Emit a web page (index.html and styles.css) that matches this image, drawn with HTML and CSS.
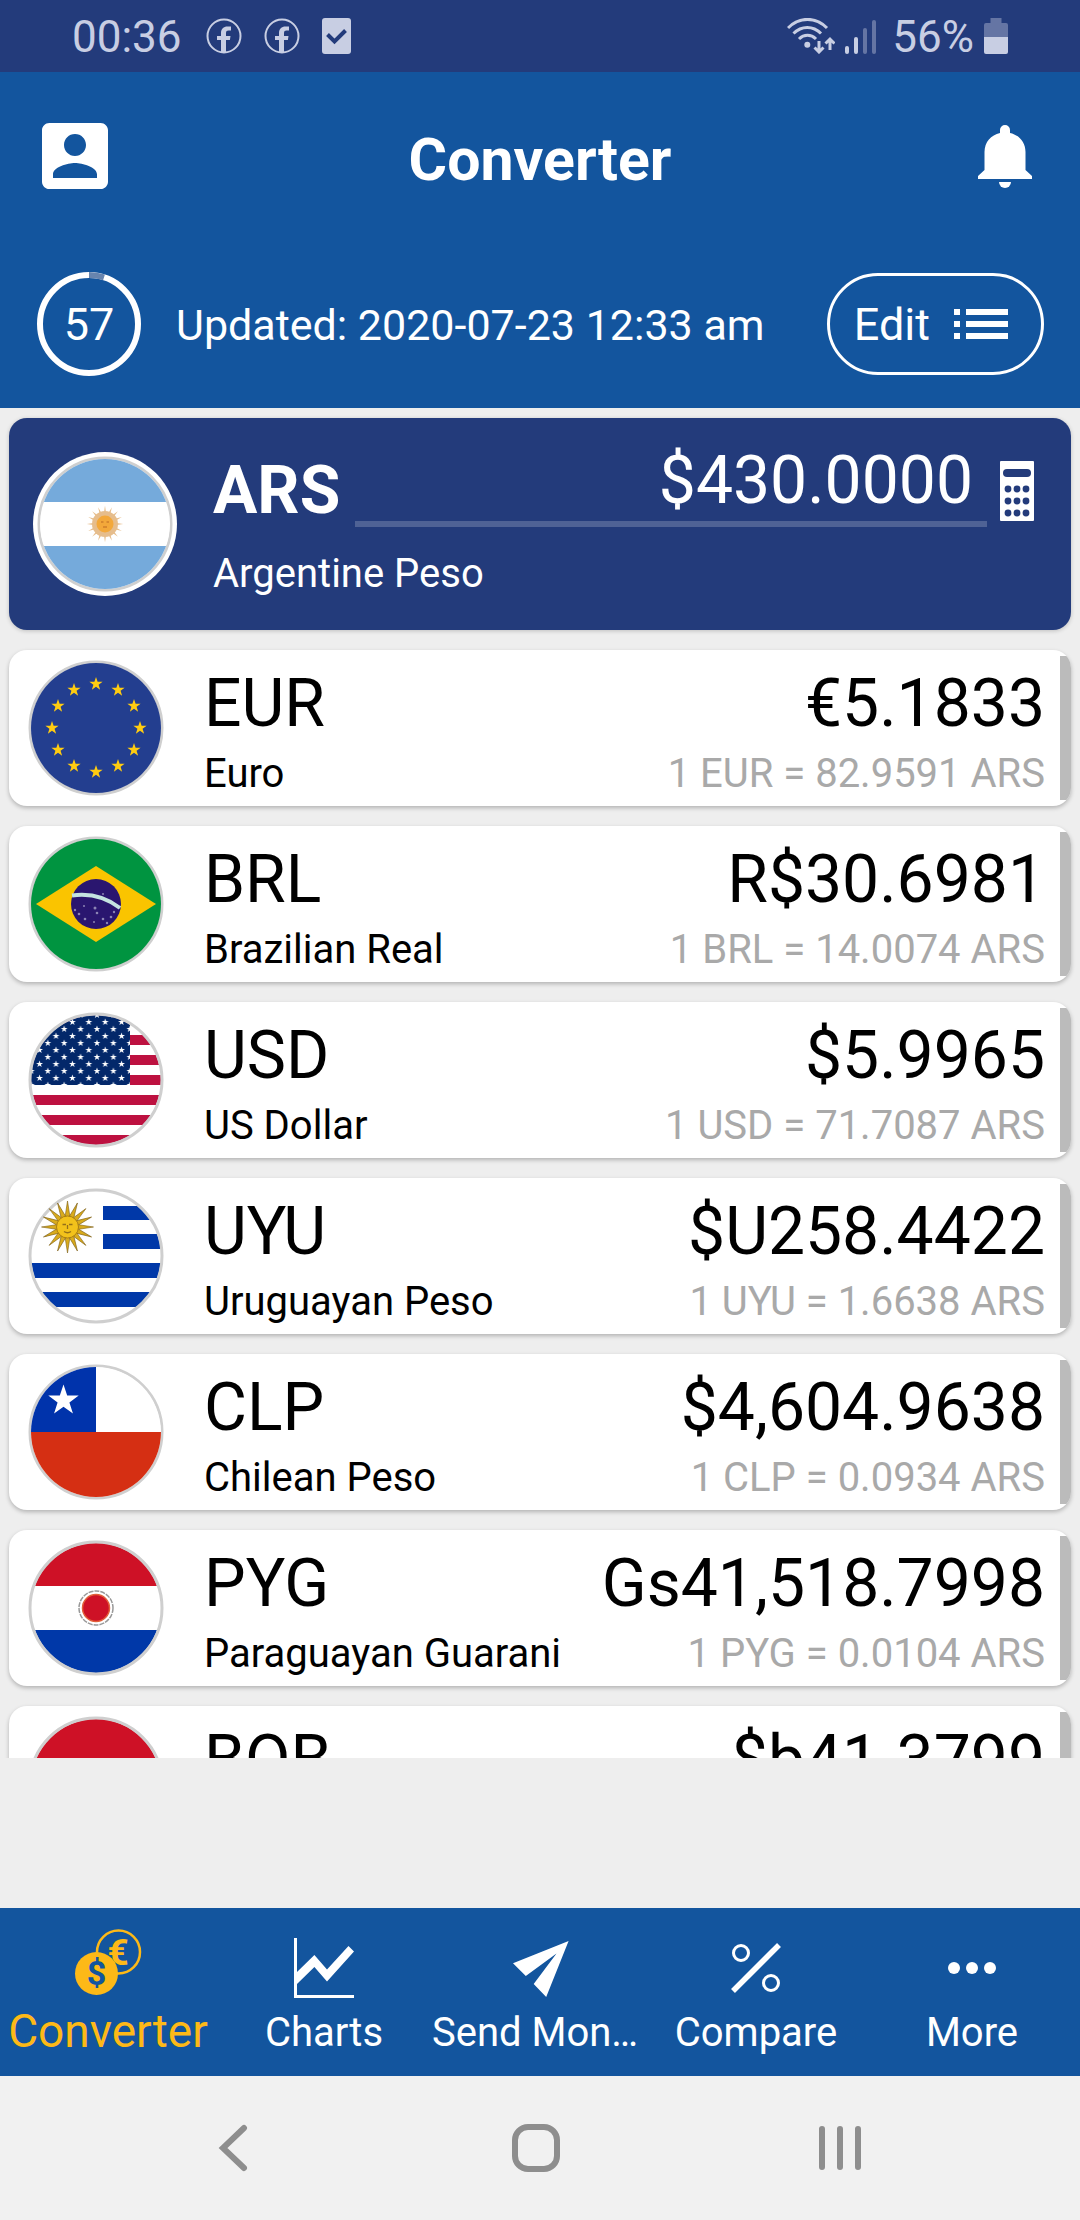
FILE: index.html
```html
<!DOCTYPE html>
<html lang="en">
<head>
    <meta charset="UTF-8">
    <meta name="viewport" content="width=device-width, initial-scale=1.0">
    <title>Converter</title>
    <link rel="stylesheet" href="styles.css">
</head>
<body>

<!-- Shared flag parts -->
<svg class="defs" width="0" height="0" aria-hidden="true">
    <defs>
        <clipPath id="round"><circle cx="68" cy="68" r="65"/></clipPath>
        <polygon id="star" points="0,-10 2.3,-3.1 9.5,-3.1 3.7,1.2 5.9,8.1 0,3.9 -5.9,8.1 -3.7,1.2 -9.5,-3.1 -2.3,-3.1"/>
        <circle id="ring" cx="68" cy="68" r="66" fill="none" stroke="#cfcfcf" stroke-width="3"/>
        <path id="ray" d="M0-26L4 0L0 26L-4 0Z"/>
        <g id="rays">
            <use href="#ray"/>
            <use href="#ray" transform="rotate(22.5)"/>
            <use href="#ray" transform="rotate(45)"/>
            <use href="#ray" transform="rotate(67.5)"/>
            <use href="#ray" transform="rotate(90)"/>
            <use href="#ray" transform="rotate(112.5)"/>
            <use href="#ray" transform="rotate(135)"/>
            <use href="#ray" transform="rotate(157.5)"/>
        </g>
        <pattern id="us-stars" x="3.4" y="3" width="16.4" height="14" patternUnits="userSpaceOnUse">
            <g fill="#fff">
                <use href="#star" transform="translate(8.2 7) scale(.36)"/>
                <use href="#star" transform="scale(.36)"/>
                <use href="#star" transform="translate(16.4 0) scale(.36)"/>
                <use href="#star" transform="translate(0 14) scale(.36)"/>
                <use href="#star" transform="translate(16.4 14) scale(.36)"/>
            </g>
        </pattern>
        <g id="facebook">
            <circle cx="18" cy="18" r="16.5" fill="none" stroke="currentColor" stroke-width="2"/>
            <path d="M15 35V22h-4v-4h4v-3c0-4 2.500-6.500 6.500-6.500H25v4h-2.500c-1.700 0-2.500.8-2.500 2.500v3h4.500l-.6 4H20v13z" fill="currentColor"/>
        </g>
    </defs>
</svg>

<div class="status-bar">
    <span class="clock">00:36</span>
    <div class="notifications">
        <svg width="36" height="36" viewBox="0 0 36 36"><use href="#facebook"/></svg>
        <svg width="36" height="36" viewBox="0 0 36 36"><use href="#facebook"/></svg>
        <svg width="29" height="36" viewBox="0 0 29 36">
            <rect width="29" height="36" rx="3" fill="currentColor"/>
            <path d="M5.500 16.500l7 7L23.500 12.500" fill="none" stroke="#233b7b" stroke-width="4"/>
        </svg>
    </div>
    <div class="signals">
        <svg width="48" height="36" viewBox="0 0 48 36" fill="none" stroke="currentColor" stroke-width="3">
            <path d="M1 10C12-1.500 29-1.500 40 10M6.500 15.500c8-8 19.500-8 27.500 0M12 21c5-5 12-5 17 0"/>
            <circle cx="20.300" cy="26.700" r="3" fill="currentColor" stroke="none"/>
            <path d="M32 23v10M27.500 29.500l4.500 4.500 4.500-4.500M43 32V22M38.500 25.500L43 21l4.500 4.500"/>
        </svg>
        <svg width="31" height="34" viewBox="0 0 31 34" fill="currentColor">
            <rect y="26" width="4" height="8" rx="2"/>
            <rect x="9" y="17" width="4" height="17" rx="2"/>
            <rect x="18" y="8" width="4" height="26" rx="2" opacity=".4"/>
            <rect x="27" width="4" height="34" rx="2" opacity=".4"/>
        </svg>
    </div>
    <span class="percent">56%</span>
    <svg width="24" height="36" viewBox="0 0 24 36" fill="currentColor">
        <path d="M6.500 0h11v5H22q2 0 2 2v12H0V7q0-2 2-2h4.500z" opacity=".4"/>
        <path d="M0 19h24v15q0 2-2 2H2q-2 0-2-2z"/>
    </svg>
</div>

<header>
    <div class="title-bar">
        <button class="icon-button" type="button" aria-label="Account">
            <svg width="66" height="66" viewBox="3 3 18 18" fill="currentColor"><path d="M3 5v14c0 1.100.89 2 2 2h14c1.100 0 2-.9 2-2V5c0-1.100-.9-2-2-2H5c-1.110 0-2 .9-2 2zm12 4c0 1.660-1.340 3-3 3s-3-1.340-3-3 1.340-3 3-3 3 1.340 3 3zm-9 8c0-2 4-3.100 6-3.100s6 1.100 6 3.100v1H6v-1z"/></svg>
        </button>
        <h1>Converter</h1>
        <button class="icon-button" type="button" aria-label="Alerts">
            <svg width="54" height="63" viewBox="0 0 54 63" fill="currentColor">
                <path d="M22 8V5a5 5 0 0 1 10 0v3c9 2 15.500 9 15.500 19v18L54 51v3H0v-3l6.500-6V27C6.500 17 13 10 22 8z"/>
                <path d="M21 57h12a6 6 0 0 1-12 0z"/>
            </svg>
        </button>
    </div>
    <div class="update-bar">
        <div class="countdown">
            <svg width="104" height="104" viewBox="0 0 104 104" fill="none" stroke-width="6">
                <circle cx="52" cy="52" r="49" stroke="#fff"/>
                <path d="M52 3A49 49 0 0 1 67 5.400" stroke="#6784ae"/>
            </svg>
            <span>57</span>
        </div>
        <p>Updated: 2020-07-23 12:33 am</p>
        <button class="edit-button" type="button">
            Edit
            <svg width="54" height="30" viewBox="0 0 54 30" fill="currentColor"><path d="M0 0h6v6H0zM12 0h42v6H12zM0 12h6v6H0zM12 12h42v6H12zM0 24h6v6H0zM12 24h42v6H12z"/></svg>
        </button>
    </div>
</header>

<main>
    <section class="base-card">
        <svg class="base-flag" width="144" height="144" viewBox="0 0 144 144">
            <circle cx="72" cy="72" r="72" fill="#fff"/>
            <g transform="translate(4 4)">
                <use href="#ring"/>
                <g clip-path="url(#round)">
                    <rect width="136" height="136" fill="#fff"/>
                    <path d="M0 0h136v46H0zM0 90h136v46H0z" fill="#75aadb"/>
                </g>
                <use href="#rays" transform="translate(68 68) scale(.7)" fill="#e6bd8c"/>
                <circle cx="68" cy="68" r="13" fill="#e6bd8c"/>
                <circle cx="68" cy="68" r="8.500" fill="#f3a83a"/>
                <path d="M64 66h2.500M69.500 66H72M66 71h4" stroke="#cf7f2b" stroke-width="1.500"/>
            </g>
        </svg>
        <div class="base-info">
            <div class="base-row">
                <label class="base-code" for="amount">ARS</label>
                <input class="base-amount" id="amount" type="text" inputmode="decimal" value="$430.0000">
                <button class="icon-button calculator" type="button" aria-label="Calculator">
                    <svg width="34" height="60" viewBox="0 0 34 60">
                        <rect width="34" height="60" rx="1" fill="#fff"/>
                        <g fill="#233b7b">
                            <rect x="3" y="8" width="28" height="8" rx="4"/>
                            <circle cx="8" cy="28" r="3.400"/><circle cx="17" cy="28" r="3.400"/><circle cx="26" cy="28" r="3.400"/>
                            <circle cx="8" cy="40" r="3.400"/><circle cx="17" cy="40" r="3.400"/><circle cx="26" cy="40" r="3.400"/>
                            <circle cx="8" cy="52" r="3.400"/><circle cx="17" cy="52" r="3.400"/><circle cx="26" cy="52" r="3.400"/>
                        </g>
                    </svg>
                </button>
            </div>
            <p class="name">Argentine Peso</p>
        </div>
    </section>

    <ul class="currency-list">
        <li class="currency">
            <svg class="flag" width="136" height="136" viewBox="0 0 136 136">
                <use href="#ring"/>
                <circle cx="68" cy="68" r="65" fill="#233e8f"/>
                <g fill="#fc1" transform="translate(68 68)">
                    <use href="#star" transform="translate(0 -44) scale(.7)"/>
                    <use href="#star" transform="translate(22 -38) scale(.7)"/>
                    <use href="#star" transform="translate(38 -22) scale(.7)"/>
                    <use href="#star" transform="translate(44 0) scale(.7)"/>
                    <use href="#star" transform="translate(38 22) scale(.7)"/>
                    <use href="#star" transform="translate(22 38) scale(.7)"/>
                    <use href="#star" transform="translate(0 44) scale(.7)"/>
                    <use href="#star" transform="translate(-22 38) scale(.7)"/>
                    <use href="#star" transform="translate(-38 22) scale(.7)"/>
                    <use href="#star" transform="translate(-44 0) scale(.7)"/>
                    <use href="#star" transform="translate(-38 -22) scale(.7)"/>
                    <use href="#star" transform="translate(-22 -38) scale(.7)"/>
                </g>
            </svg>
            <div class="label">
                <h2>EUR</h2>
                <p class="name">Euro</p>
            </div>
            <div class="value">
                <p class="amount">€5.1833</p>
                <p class="rate">1 EUR = 82.9591 ARS</p>
            </div>
            <span class="handle"></span>
        </li>
        <li class="currency">
            <svg class="flag" width="136" height="136" viewBox="0 0 136 136">
                <use href="#ring"/>
                <circle cx="68" cy="68" r="65" fill="#009440"/>
                <path d="M68 30l60 38-60 38L8 68z" fill="#fac400"/>
                <circle cx="68" cy="68" r="25" fill="#2a166f"/>
                <path d="M44 59.500C62 57 79 62 92 72" fill="none" stroke="#c4e3e0" stroke-width="4"/>
                <g fill="#8c84b4">
                    <circle cx="47" cy="74" r="1.200"/><circle cx="51" cy="78" r="1.300"/><circle cx="56" cy="70" r="1"/>
                    <circle cx="57" cy="83" r="1.300"/><circle cx="67" cy="72" r="1.500"/><circle cx="69" cy="77" r="1.300"/>
                    <circle cx="66" cy="86" r="1"/><circle cx="75" cy="83" r="1.300"/><circle cx="79" cy="87" r="1.200"/>
                    <circle cx="83" cy="81" r="1.300"/><circle cx="86" cy="76" r="1.200"/><circle cx="75" cy="58" r="1"/>
                </g>
            </svg>
            <div class="label">
                <h2>BRL</h2>
                <p class="name">Brazilian Real</p>
            </div>
            <div class="value">
                <p class="amount">R$30.6981</p>
                <p class="rate">1 BRL = 14.0074 ARS</p>
            </div>
            <span class="handle"></span>
        </li>
        <li class="currency">
            <svg class="flag" width="136" height="136" viewBox="0 0 136 136">
                <g clip-path="url(#round)">
                    <rect width="136" height="136" fill="#fff"/>
                    <path d="M0 3h136v10H0zM0 23h136v10H0zM0 43h136v10H0zM0 63h136v10H0zM0 83h136v10H0zM0 103h136v10H0zM0 123h136v10H0z" fill="#bd1140"/>
                    <rect width="102" height="73" fill="#03286a"/>
                    <rect width="102" height="73" fill="url(#us-stars)"/>
                </g>
                <use href="#ring"/>
            </svg>
            <div class="label">
                <h2>USD</h2>
                <p class="name">US Dollar</p>
            </div>
            <div class="value">
                <p class="amount">$5.9965</p>
                <p class="rate">1 USD = 71.7087 ARS</p>
            </div>
            <span class="handle"></span>
        </li>
        <li class="currency">
            <svg class="flag" width="136" height="136" viewBox="0 0 136 136">
                <g clip-path="url(#round)">
                    <rect width="136" height="136" fill="#fff"/>
                    <path d="M75 18h61v14H75zM75 46h61v15H75zM0 75h136v15H0zM0 104h136v15H0z" fill="#0038a8"/>
                </g>
                <use href="#ring"/>
                <use href="#rays" transform="translate(39.500 39)" fill="#d9ab1c" stroke="#7d5f18" stroke-width=".6"/>
                <circle cx="39.500" cy="39" r="11" fill="#f2c21b" stroke="#a87d14"/>
                <path d="M34.500 36.500h3.500M41 36.500h3.500M39.500 37v4M36 43.500q3.500 2.500 7 0" fill="none" stroke="#94701a" stroke-width="1.300"/>
            </svg>
            <div class="label">
                <h2>UYU</h2>
                <p class="name">Uruguayan Peso</p>
            </div>
            <div class="value">
                <p class="amount">$U258.4422</p>
                <p class="rate">1 UYU = 1.6638 ARS</p>
            </div>
            <span class="handle"></span>
        </li>
        <li class="currency">
            <svg class="flag" width="136" height="136" viewBox="0 0 136 136">
                <use href="#ring"/>
                <g clip-path="url(#round)">
                    <rect width="136" height="136" fill="#fff"/>
                    <rect width="68" height="68" fill="#0033ab"/>
                    <rect y="68" width="136" height="68" fill="#d52f13"/>
                </g>
                <use href="#star" transform="translate(35.500 36.500) scale(1.600)" fill="#fff"/>
            </svg>
            <div class="label">
                <h2>CLP</h2>
                <p class="name">Chilean Peso</p>
            </div>
            <div class="value">
                <p class="amount">$4,604.9638</p>
                <p class="rate">1 CLP = 0.0934 ARS</p>
            </div>
            <span class="handle"></span>
        </li>
        <li class="currency">
            <svg class="flag" width="136" height="136" viewBox="0 0 136 136">
                <g clip-path="url(#round)">
                    <rect width="136" height="136" fill="#fff"/>
                    <rect width="136" height="46" fill="#ce1126"/>
                    <rect y="90" width="136" height="46" fill="#0038a8"/>
                </g>
                <use href="#ring"/>
                <circle cx="68" cy="68" r="17" fill="none" stroke="#999" stroke-width="1.500" stroke-dasharray="5 1"/>
                <circle cx="68" cy="68" r="13.500" fill="#ce1126" stroke="#e2603a" stroke-width="1.500"/>
            </svg>
            <div class="label">
                <h2>PYG</h2>
                <p class="name">Paraguayan Guarani</p>
            </div>
            <div class="value">
                <p class="amount">Gs41,518.7998</p>
                <p class="rate">1 PYG = 0.0104 ARS</p>
            </div>
            <span class="handle"></span>
        </li>
        <li class="currency">
            <svg class="flag" width="136" height="136" viewBox="0 0 136 136">
                <g clip-path="url(#round)">
                    <rect width="136" height="46" fill="#ce1126"/>
                    <rect y="46" width="136" height="44" fill="#fcd116"/>
                    <rect y="90" width="136" height="46" fill="#007934"/>
                </g>
                <use href="#ring"/>
            </svg>
            <div class="label">
                <h2>BOB</h2>
                <p class="name">Bolivian Boliviano</p>
            </div>
            <div class="value">
                <p class="amount">$b41.3799</p>
                <p class="rate">1 BOB = 10.3915 ARS</p>
            </div>
            <span class="handle"></span>
        </li>
    </ul>
</main>

<nav class="tabs">
    <a class="tab active" href="#converter">
        <svg width="80" height="80" viewBox="0 0 80 80">
            <circle cx="50.500" cy="24" r="21.500" fill="none" stroke="currentColor" stroke-width="2.500"/>
            <text class="coin" x="50" y="37" font-size="37" fill="currentColor">€</text>
            <circle cx="28.500" cy="45.500" r="21.500" fill="currentColor"/>
            <text class="coin" x="28.500" y="57" font-size="34" fill="#13559e">$</text>
        </svg>
        <span>Converter</span>
    </a>
    <a class="tab" href="#charts">
        <svg width="80" height="80" viewBox="0 0 80 80" fill="currentColor">
            <path d="M10 10h3v57h57v3H10z"/>
            <path d="M13 44l17.400-17L43 41.500 64.500 18l5.500 5.500-27 30L30.400 39 13 56z"/>
        </svg>
        <span>Charts</span>
    </a>
    <a class="tab" href="#send">
        <svg width="80" height="80" viewBox="0 0 80 80" fill="currentColor"><path d="M13 35.300L68.600 13 46.200 69 33.700 56 56.500 25.400 25.800 48z"/></svg>
        <span>Send Money</span>
    </a>
    <a class="tab" href="#compare">
        <svg width="80" height="80" viewBox="0 0 80 80" fill="none" stroke="currentColor" stroke-width="3">
            <circle cx="25" cy="25" r="7.500"/>
            <circle cx="55" cy="55" r="7.500"/>
            <path d="M17 63L63 17" stroke-width="5.500"/>
        </svg>
        <span>Compare</span>
    </a>
    <a class="tab" href="#more">
        <svg width="80" height="80" viewBox="0 0 80 80" fill="currentColor">
            <circle cx="22" cy="40" r="6"/><circle cx="40" cy="40" r="6"/><circle cx="58" cy="40" r="6"/>
        </svg>
        <span>More</span>
    </a>
</nav>

<div class="system-nav">
    <button type="button" aria-label="Back">
        <svg width="48" height="48" viewBox="0 0 48 48"><path d="M36 4L15 24l21 20"/></svg>
    </button>
    <button type="button" aria-label="Home">
        <svg width="48" height="48" viewBox="0 0 48 48"><rect x="3" y="3" width="42" height="42" rx="13"/></svg>
    </button>
    <button type="button" aria-label="Recent apps">
        <svg width="48" height="48" viewBox="0 0 48 48"><path d="M6 5v38M24 5v38M42 5v38"/></svg>
    </button>
</div>

</body>
</html>
```

FILE: styles.css
```css
* {
    box-sizing: border-box;
}

body {
    font-family: Roboto, sans-serif;
    background-color: #eee;
    color: #000;
    margin: 0;
    height: 100vh;
    display: flex;
    flex-direction: column;
}

h1, h2, p, ul {
    margin: 0;
    padding: 0;
}

svg {
    display: block;
    flex-shrink: 0;
}

button {
    font: inherit;
    color: inherit;
    background: none;
    border: none;
    padding: 0;
    cursor: pointer;
}

.defs {
    position: absolute;
}

/* Phone status bar */
.status-bar {
    display: flex;
    align-items: center;
    height: 72px;
    padding: 0 72px;
    background-color: #233b7b;
    color: #c8cee3;
    font-size: 44px;
    line-height: 54px;
    flex-shrink: 0;
}

.clock,
.percent {
    padding-top: 2px;
}

.notifications {
    display: flex;
    gap: 22px;
    margin-left: 24px;
    margin-right: auto;
}

.signals {
    display: flex;
    align-items: flex-end;
    gap: 10px;
}

.percent {
    margin: 0 10px 0 16px;
}

/* Header */
header {
    background-color: #13559e;
    color: #fff;
    flex-shrink: 0;
}

.title-bar {
    display: grid;
    grid-template-columns: 1fr auto 1fr;
    align-items: center;
    height: 168px;
    padding: 0 48px 0 42px;
}

.title-bar h1 {
    font-size: 59px;
    line-height: 70px;
    padding-top: 8px;
    padding-left: 6px;
}

.title-bar .icon-button:last-child {
    justify-self: end;
}

.title-bar .icon-button:first-child {
    justify-self: start;
}

.update-bar {
    display: flex;
    align-items: center;
    height: 168px;
    padding: 0 36px 0 37px;
    font-size: 45px;
}

.countdown {
    display: grid;
    place-items: center;
}

.countdown > * {
    grid-area: 1 / 1;
}

.update-bar p {
    margin-left: 35px;
    margin-right: auto;
    padding-top: 2px;
    font-size: 43px;
    white-space: nowrap;
}

.edit-button {
    display: flex;
    align-items: center;
    gap: 24px;
    height: 102px;
    padding: 0 33px 0 24px;
    border: 3px solid #fff;
    border-radius: 51px;
}

/* Currency cards */
main {
    flex: 1;
    min-height: 0;
    margin-bottom: 150px;
    padding: 10px 9px 0;
    overflow: hidden;
}

.base-card {
    display: flex;
    align-items: center;
    padding: 0 37px 0 24px;
    margin-bottom: 20px;
    background-color: #233b7b;
    color: #fff;
    border-radius: 18px;
    box-shadow: 0 1px 4px rgba(0, 0, 0, 0.2);
}

.base-info {
    flex: 1;
    min-width: 0;
    padding: 23px 0 33px 36px;
}

.base-row {
    display: flex;
    align-items: flex-start;
    margin-bottom: 10px;
}

.base-code {
    font-size: 66px;
    font-weight: bold;
    line-height: 100px;
}

.base-amount {
    flex: 1;
    min-width: 0;
    height: 86px;
    margin: 0 13px 0 15px;
    padding: 0 14px 2px 0;
    border: none;
    border-bottom: 6px solid #4f6295;
    background: none;
    color: #fff;
    font: 66px Roboto, sans-serif;
    text-align: right;
    outline: none;
}

.calculator {
    margin-top: 20px;
}

.currency-list {
    display: grid;
    gap: 20px;
    list-style: none;
}

.currency {
    display: flex;
    align-items: center;
    background-color: #fff;
    border-radius: 18px;
    box-shadow: 0 2px 4px rgba(0, 0, 0, 0.25);
    overflow: hidden;
}

.flag {
    margin-left: 19px;
}

.label {
    flex: 1;
    padding: 15px 0 9px 40px;
}

.label h2,
.amount {
    font-size: 66px;
    font-weight: normal;
    line-height: 78px;
    margin-bottom: 8px;
}

.name,
.rate {
    font-size: 40px;
    line-height: 46px;
    white-space: nowrap;
}

.value {
    padding: 15px 15px 9px 0;
    text-align: right;
}

.rate {
    color: #a9a9a9;
}

.handle {
    width: 11px;
    height: 144px;
    background-color: #bbb;
}

/* Bottom tabs */
.tabs {
    display: grid;
    grid-template-columns: repeat(5, 1fr);
    background-color: #13559e;
    flex-shrink: 0;
}

.tab {
    display: flex;
    flex-direction: column;
    align-items: center;
    min-width: 0;
    padding: 20px 0 18px;
    color: #fff;
    font-size: 40px;
    line-height: 50px;
    text-decoration: none;
}

.tab span {
    max-width: 100%;
    overflow: hidden;
    text-overflow: ellipsis;
    white-space: nowrap;
}

.tab.active {
    color: #fdb917;
    font-size: 46px;
    line-height: 46px;
}

.coin {
    font-family: Roboto, sans-serif;
    font-weight: bold;
    text-anchor: middle;
}

/* Phone navigation */
.system-nav {
    display: grid;
    grid-template-columns: repeat(3, 1fr);
    height: 144px;
    padding: 0 88px 0 80px;
    background-color: #f1f1f1;
    flex-shrink: 0;
}

.system-nav button {
    display: flex;
    align-items: center;
    justify-content: center;
}

.system-nav svg {
    fill: none;
    stroke: #8e8e8e;
    stroke-width: 6px;
    stroke-linecap: round;
}
```
